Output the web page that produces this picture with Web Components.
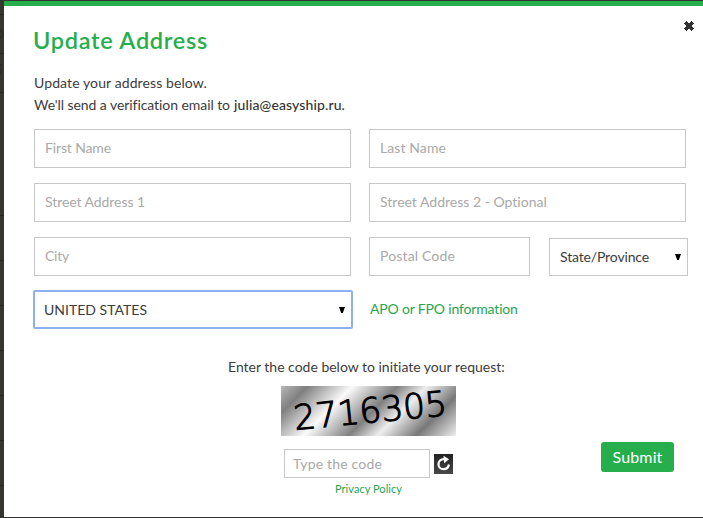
<!DOCTYPE html>
<html lang="en">
  <head>
    <meta charset="UTF-8" />
    <meta name="viewport" content="width=device-width, initial-scale=1.0" />
    <title>Update Address</title>
    <style>
      body {
        margin: 0;
        width: 703px;
        height: 518px;
        overflow: hidden;
        font: 14px/22px Lato, 'Open Sans', sans-serif;
        color: #3c3c3c;
      }
    </style>
  </head>
  <body>
    <address-dialog></address-dialog>

    <template id="fitTextTemplate">
      <style>
        :host {
          display: inline-block;
          white-space: nowrap;
        }
      </style>
      <span><slot></slot></span>
    </template>

    <template id="formFieldTemplate">
      <style>
        :host {
          display: flex;
          align-items: center;
          justify-content: space-between;
          box-sizing: border-box;
          height: 39px;
          padding: 0 6px 2px 10px;
          border: 1px solid #c8c8c8;
          background: #fff;
          color: #a9a9a9;
        }
        :host([select]) {
          height: 38px;
          padding-bottom: 0;
          color: #3c3c3c;
        }
        :host([focused]) {
          height: 39px;
          border: 2px solid #8db1f0;
          border-radius: 2px;
          padding: 0 6px 0 9px;
        }
        :host([small]) {
          height: 29px;
          padding: 0 0 0 8px;
        }
        svg {
          display: none;
        }
        :host([select]) svg {
          display: block;
        }
      </style>
      <slot></slot>
      <svg width="6" height="6" viewBox="0 0 6 6"><path d="M0 0h6L3.800 6H2.200z" fill="#000" /></svg>
    </template>

    <template id="captchaTemplate">
      <style>
        :host {
          display: block;
          width: 175px;
          height: 50px;
        }
        svg {
          display: block;
          overflow: visible;
        }
      </style>
      <svg width="175" height="50" viewBox="0 0 175 50">
        <defs>
          <linearGradient id="bands" gradientUnits="userSpaceOnUse" x1="0" y1="0" x2="112.5" y2="112.5">
            <stop offset="0" stop-color="#b8b8b8" />
            <stop offset="0.12" stop-color="#808080" />
            <stop offset="0.32" stop-color="#fafafa" />
            <stop offset="0.52" stop-color="#808080" />
            <stop offset="0.65" stop-color="#eee" />
            <stop offset="0.82" stop-color="#787878" />
            <stop offset="1" stop-color="#eee" />
          </linearGradient>
        </defs>
        <rect width="175" height="50" fill="url(#bands)" />
        <text x="14" y="44" transform="rotate(-5.6 14 44)" font-family="'DejaVu Sans Light', 'DejaVu Sans'" font-weight="200" font-size="34.5" stroke="#000" stroke-width="1.1">2716305</text>
      </svg>
    </template>

    <template id="dialogTemplate">
      <style>
        :host {
          display: grid;
          grid-template-columns: 4px 1fr;
          box-sizing: border-box;
          height: 518px;
          padding: 1px 0;
          background: #343434;
        }
        .page svg {
          display: block;
        }
        .panel {
          height: 511px;
          border-top: 5px solid #27ae4c;
          background: #fff;
          padding-left: 30px;
        }
        header {
          display: flex;
          justify-content: space-between;
          box-sizing: border-box;
          height: 51px;
          padding: 15px 9px 0 0;
        }
        h2 {
          margin: 5px 0 0 -1px;
          font-size: 23.5px;
          line-height: 28px;
          font-weight: 600;
          color: #27ae4c;
        }
        .intro {
          display: flex;
          flex-direction: column;
          height: 57px;
          padding-top: 15px;
        }
        .intro div {
          display: flex;
          gap: 4px;
        }
        .mail {
          font-weight: 500;
          color: #333;
        }
        .grid {
          display: grid;
          grid-template-columns: 317px 317px;
          column-gap: 18px;
          row-gap: 15px;
        }
        .zip {
          display: grid;
          grid-template-columns: 161px 139px;
          gap: 19px;
          align-items: end;
        }
        .country {
          display: flex;
          gap: 17px;
          margin: 14px 0 0 -1px;
        }
        .country form-field {
          width: 320px;
        }
        .link {
          color: #27a550;
        }
        .country .link {
          padding-top: 8px;
        }
        footer {
          display: grid;
          grid-template-columns: 247px 175px 1fr;
        }
        .captcha {
          grid-column: 2;
        }
        .label {
          grid-column: 1 / -1;
          padding: 27px 0 8px 194px;
          height: 22px;
        }
        .code {
          display: flex;
          align-items: center;
          gap: 4px;
          padding: 13px 0 0 3px;
        }
        .code form-field {
          width: 146px;
        }
        .policy {
          font-size: 11px;
          line-height: 14px;
          padding: 4px 0 0 54px;
        }
        button {
          margin: 56px 0 0 145px;
          width: 73px;
          height: 30px;
          padding: 0;
          border: 0;
          border-radius: 3px;
          background: #27ae4c;
          color: #fff;
          font: 400 16px/30px Lato, sans-serif;
        }
      </style>
      <div class="page">
        <svg width="4" height="516" viewBox="0 1 4 516">
          <path d="M0 0h4v517H0z" fill="#373532" />
          <path d="M0 14.5h4M0 53.5h4M0 92.5h4M0 215.5h4M0 260.5h4M0 305.5h4M0 350.5h4M0 395.5h4M0 440.5h4M0 485.5h4" stroke="#292725" />
          <path d="M0 30q3 0 3 4t-3 4M0 65h2M0 69q3 3 0 5" stroke="#2b2826" fill="none" />
        </svg>
      </div>
      <div class="panel">
        <header>
          <h2><fit-text width="175">Update Address</fit-text></h2>
          <svg width="10" height="10" viewBox="0 0 10 10" shape-rendering="crispEdges">
            <path d="M2 0h1v1h1v1h2v-1h1v-1h1v1h1v1h1v1h-1v1h-1v2h1v1h1v1h-1v1h-1v1h-1v-1h-1v-1h-2v1h-1v1h-1v-1h-1v-1h-1v-1h1v-1h1v-2h-1v-1h-1v-1h1v-1h1z" fill="#333" />
          </svg>
        </header>
        <div class="intro">
          <fit-text width="173">Update your address below.</fit-text>
          <div>
            <fit-text width="196">We'll send a verification email to</fit-text>
            <fit-text class="mail" width="111">julia@easyship.ru.</fit-text>
          </div>
        </div>
        <div class="grid">
          <form-field><fit-text width="66">First Name</fit-text></form-field>
          <form-field><fit-text width="66">Last Name</fit-text></form-field>
          <form-field><fit-text width="100">Street Address 1</fit-text></form-field>
          <form-field><fit-text width="167">Street Address 2 - Optional</fit-text></form-field>
          <form-field><fit-text width="24">City</fit-text></form-field>
          <div class="zip">
            <form-field><fit-text width="75">Postal Code</fit-text></form-field>
            <form-field select><fit-text width="89">State/Province</fit-text></form-field>
          </div>
        </div>
        <div class="country">
          <form-field select focused><fit-text width="103">UNITED STATES</fit-text></form-field>
          <fit-text class="link" width="148">APO or FPO information</fit-text>
        </div>
        <footer>
          <div class="label"><fit-text width="277">Enter the code below to initiate your request:</fit-text></div>
          <div class="captcha">
            <captcha-image></captcha-image>
            <div class="code">
              <form-field small><fit-text width="89">Type the code</fit-text></form-field>
              <svg width="19" height="20" viewBox="0 0 19 20">
                <defs>
                  <linearGradient id="dark" x2="0" y2="1"><stop stop-color="#222" /><stop offset="1" stop-color="#484848" /></linearGradient>
                </defs>
                <path d="M0 0h19v20H0z" fill="url(#dark)" />
                <path d="M10.500 5.200C6.500 5 4.500 7.300 4.500 10.200c0 3 2.200 5 5 5 2.800 0 5-1.800 5.400-4.700" fill="none" stroke="#fff" stroke-width="2.200" />
                <path d="M9.500 1.800l5.500 3.500-4.800 4z" fill="#fff" />
              </svg>
            </div>
            <div class="policy link"><fit-text width="67">Privacy Policy</fit-text></div>
          </div>
          <button><fit-text width="50">Submit</fit-text></button>
        </footer>
      </div>
    </template>

    <script>
      function attach(host, id) {
        const template = document.querySelector(id)
        host.attachShadow({ mode: 'open' })
        host.shadowRoot.append(document.importNode(template.content, true))
      }

      // one line of text, tracked so that it fills the given width
      class FitText extends HTMLElement {
        connectedCallback() {
          if (this.shadowRoot) return
          attach(this, '#fitTextTemplate')
          const span = this.shadowRoot.querySelector('span')
          const width = Number(this.getAttribute('width'))
          const natural = span.getBoundingClientRect().width
          const spacing = (width - natural) / this.textContent.length
          span.style.letterSpacing = spacing.toFixed(3) + 'px'
        }
      }

      class FormField extends HTMLElement {
        constructor() {
          super()
          attach(this, '#formFieldTemplate')
        }
      }

      class CaptchaImage extends HTMLElement {
        constructor() {
          super()
          attach(this, '#captchaTemplate')
        }
      }

      class AddressDialog extends HTMLElement {
        constructor() {
          super()
          attach(this, '#dialogTemplate')
        }
      }

      customElements.define('address-dialog', AddressDialog)
      customElements.define('form-field', FormField)
      customElements.define('captcha-image', CaptchaImage)
      customElements.define('fit-text', FitText)
    </script>
  </body>
</html>
